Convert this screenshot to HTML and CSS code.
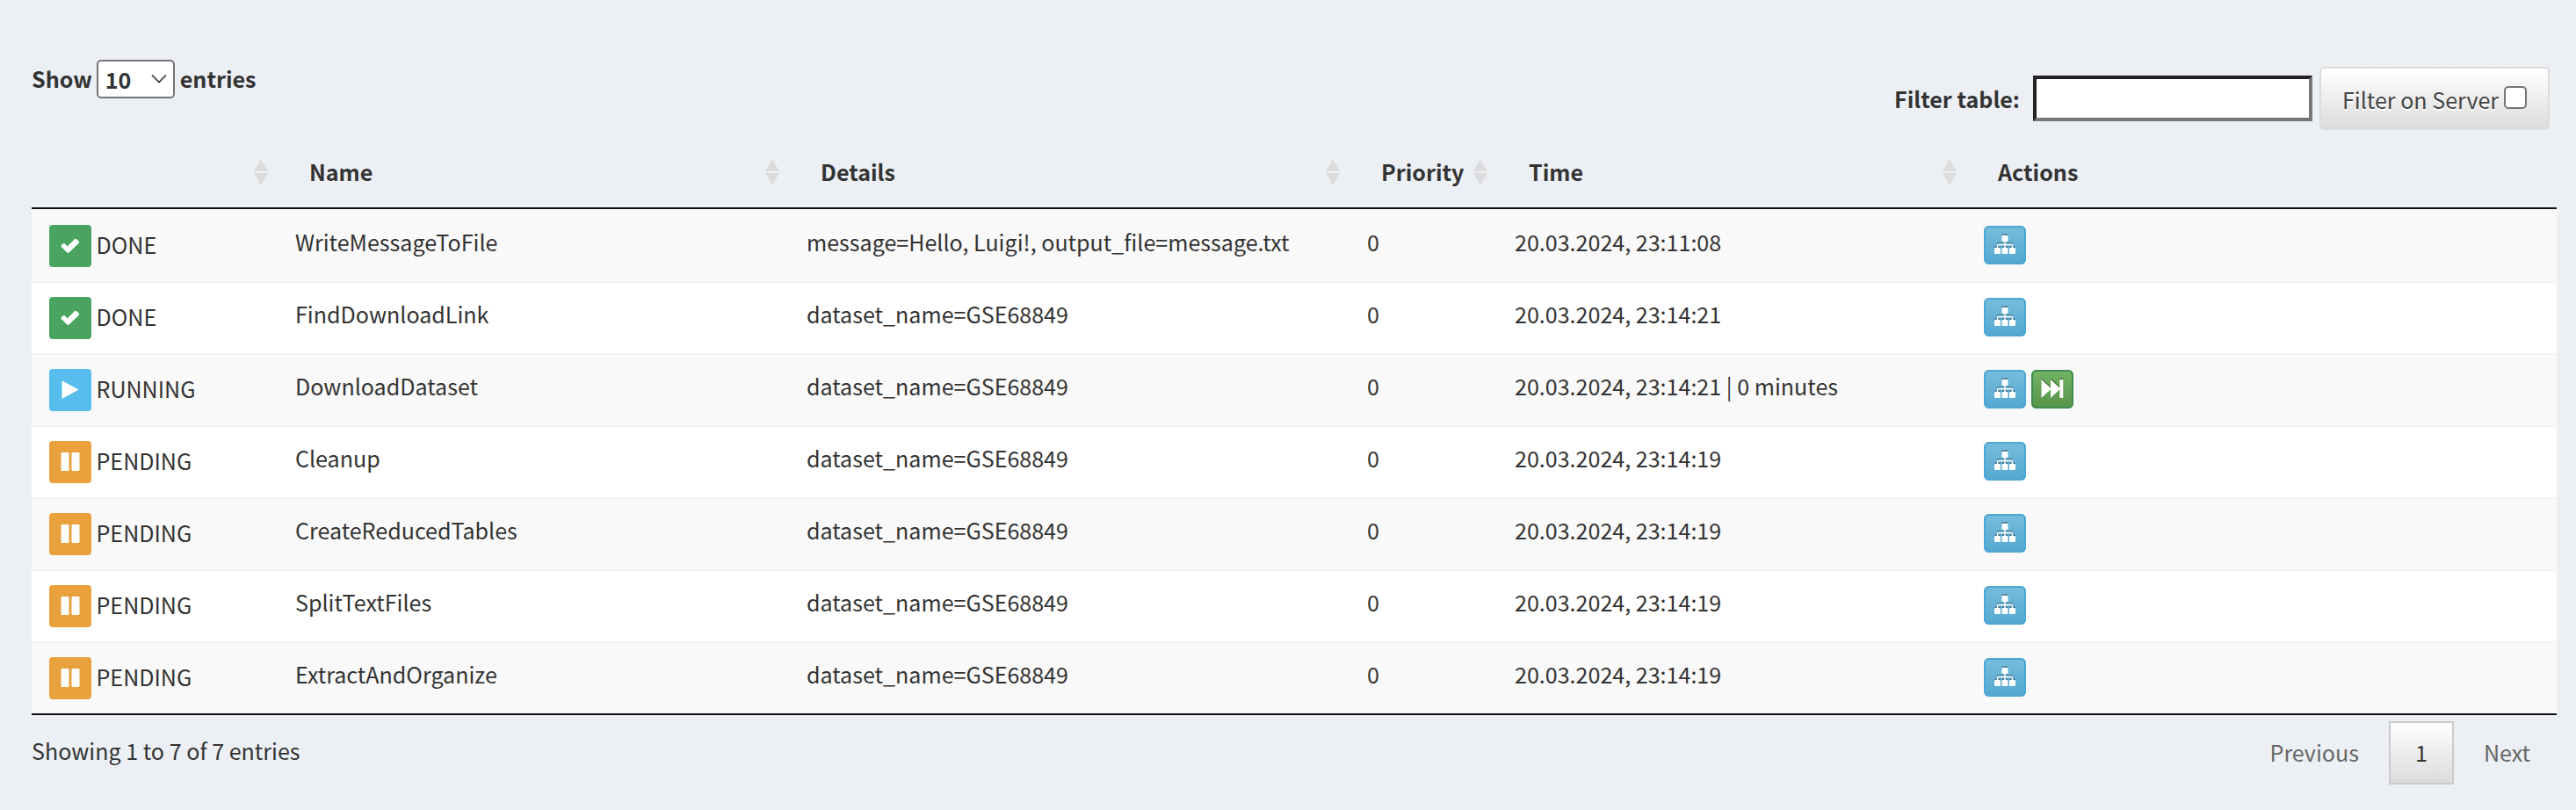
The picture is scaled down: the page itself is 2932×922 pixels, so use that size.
FILE: index.html
```
<!DOCTYPE html>
<html lang="en">
<head>
<meta charset="utf-8">
<title>Luigi Task Status</title>
<link rel="stylesheet" href="styles.css">
</head>
<body>
<svg class="defs" width="0" height="0">
  <symbol id="check" viewBox="0 0 48 48"><path fill="#fff" d="M14 25.300c-.7-.7-.7-1.500 0-2.200l1.600-1.600c.7-.7 1.500-.7 2.200 0l2.900 2.900 8.200-8.200c.7-.7 1.500-.7 2.200 0l2.600 2.300c.7.7.7 1.600 0 2.300L22.500 31.600c-.6.6-1.400.6-2 0Z"/></symbol>
  <symbol id="play" viewBox="0 0 48 48"><path fill="#fff" d="M14.500 13.200 33.600 23.500 14.500 34Z"/></symbol>
  <symbol id="pause" viewBox="0 0 48 48"><rect fill="#fff" x="13.500" y="13" width="9" height="21" rx="1"/><rect fill="#fff" x="25.500" y="13" width="9" height="21" rx="1"/></symbol>
  <symbol id="sitemap" viewBox="0 0 48 44"><g fill="#fff"><rect x="20.500" y="11" width="7" height="7" rx="1"/><rect x="12" y="25" width="7" height="7" rx="1"/><rect x="20.500" y="25" width="7" height="7" rx="1"/><rect x="29" y="25" width="7" height="7" rx="1"/></g><path fill="none" stroke="#fff" stroke-width="1.500" d="M24 17v9M15.500 26v-3.300q0-1.200 1.200-1.200h14.600q1.200 0 1.200 1.200V26"/></symbol>
  <symbol id="forward" viewBox="0 0 48 44"><path fill="#fff" d="M11.500 11 22 20.800V11l10.300 9.700V12q0-1 1-1h2q1 0 1 1v19q0 1-1 1h-2q-1 0-1-1v-8.800L22 32v-9.800L11.500 32Z"/></symbol>
  <symbol id="sort" viewBox="0 0 18 32"><path fill="#dcdcdc" d="M9 1 17 15H1ZM1 17H17L9 31Z"/></symbol>
</svg>
<main class="page">
  <div class="toolbar">
    <label class="length">Show <span class="select">10<svg class="chevron" width="18" height="12" viewBox="0 0 18 12"><path d="M1 1.500 9 9.500 17 1.500" fill="none" stroke="#333" stroke-width="1.700"/></svg></span> entries</label>
    <div class="filter">
      <label class="filter-label" for="q">Filter table:</label>
      <input class="filter-input" id="q" type="text">
      <label class="server">Filter on Server<span class="checkbox"></span></label>
    </div>
  </div>
  <div class="table">
    <div class="row head">
      <div><svg class="sort"><use href="#sort"/></svg></div>
      <div>Name<svg class="sort"><use href="#sort"/></svg></div>
      <div>Details<svg class="sort"><use href="#sort"/></svg></div>
      <div>Priority<svg class="sort"><use href="#sort"/></svg></div>
      <div>Time<svg class="sort"><use href="#sort"/></svg></div>
      <div>Actions</div>
    </div>
    <div class="row"><div class="status"><svg class="badge done"><use href="#check"/></svg>DONE</div><div>WriteMessageToFile</div><div>message=Hello, Luigi!, output_file=message.txt</div><div>0</div><div>20.03.2024, 23:11:08</div><div class="actions"><svg class="btn info"><use href="#sitemap"/></svg></div></div>
    <div class="row"><div class="status"><svg class="badge done"><use href="#check"/></svg>DONE</div><div>FindDownloadLink</div><div>dataset_name=GSE68849</div><div>0</div><div>20.03.2024, 23:14:21</div><div class="actions"><svg class="btn info"><use href="#sitemap"/></svg></div></div>
    <div class="row"><div class="status"><svg class="badge running"><use href="#play"/></svg>RUNNING</div><div>DownloadDataset</div><div>dataset_name=GSE68849</div><div>0</div><div>20.03.2024, 23:14:21 | 0 minutes</div><div class="actions"><svg class="btn info"><use href="#sitemap"/></svg><svg class="btn success"><use href="#forward"/></svg></div></div>
    <div class="row"><div class="status"><svg class="badge pending"><use href="#pause"/></svg>PENDING</div><div>Cleanup</div><div>dataset_name=GSE68849</div><div>0</div><div>20.03.2024, 23:14:19</div><div class="actions"><svg class="btn info"><use href="#sitemap"/></svg></div></div>
    <div class="row"><div class="status"><svg class="badge pending"><use href="#pause"/></svg>PENDING</div><div>CreateReducedTables</div><div>dataset_name=GSE68849</div><div>0</div><div>20.03.2024, 23:14:19</div><div class="actions"><svg class="btn info"><use href="#sitemap"/></svg></div></div>
    <div class="row"><div class="status"><svg class="badge pending"><use href="#pause"/></svg>PENDING</div><div>SplitTextFiles</div><div>dataset_name=GSE68849</div><div>0</div><div>20.03.2024, 23:14:19</div><div class="actions"><svg class="btn info"><use href="#sitemap"/></svg></div></div>
    <div class="row"><div class="status"><svg class="badge pending"><use href="#pause"/></svg>PENDING</div><div>ExtractAndOrganize</div><div>dataset_name=GSE68849</div><div>0</div><div>20.03.2024, 23:14:19</div><div class="actions"><svg class="btn info"><use href="#sitemap"/></svg></div></div>
  </div>
  <div class="footer">
    <div class="info-text">Showing 1 to 7 of 7 entries</div>
    <div class="pager"><span class="page-link">Previous</span><span class="page-link current">1</span><span class="page-link">Next</span></div>
  </div>
</main>
</body>
</html>
```
FILE: styles.css
```
* { box-sizing: border-box; }
body {
  margin: 0;
  background: #ecf0f5;
  color: #333;
  font: 25.070px/40px "Noto Sans CJK SC", "Open Sans", sans-serif;
  white-space: nowrap;
}
.defs { position: absolute; }
.page { padding: 68px 22px 0 36px; height: 922px; overflow: hidden; }
.toolbar { display: flex; justify-content: space-between; height: 98px; font-weight: 700; }
.length { display: flex; gap: 6px; height: 44px; line-height: 43px; }
.select {
  display: flex;
  align-items: center;
  justify-content: space-between;
  width: 89px;
  height: 44px;
  margin-left: -1px;
  padding: 0 7px 0 8px;
  border: 2px solid #767676;
  border-radius: 5px;
  background: #fff;
  line-height: 38px;
}
.filter { display: flex; align-items: center; height: 72px; margin: 8px 8px 0 0; }
.filter-label { margin-right: 15px; }
.filter-input { width: 318px; height: 52px; margin-right: 8px; padding: 0; border: 4px solid; border-color: #222 #767676 #767676 #222; background: #fff; }
.server {
  display: flex;
  width: 262px;
  height: 72px;
  padding: 15px 0 0 24px;
  border: 2px solid #dcdcdc;
  border-radius: 5px;
  background: linear-gradient(#fff, #dcdcdc);
  color: #444;
  font-weight: 400;
  text-shadow: 0 2px 0 #fff;
}
.checkbox { width: 26px; height: 26px; margin: 5px 0 0 6px; border: 2px solid #767676; border-radius: 5px; background: #fff; }
.table { border-bottom: 2px solid #111; }
.row {
  display: grid;
  grid-template-columns: 280px 582px 638px 168px 534px 1fr;
  height: 82px;
  border-top: 2px solid #f4f4f4;
  background: #fff;
}
.row:nth-child(even) { background: #f9f9f9; }
.row > div { padding: 15px 0 0 20px; }
.row.head { height: 72px; border-top: 0; border-bottom: 2px solid #111; background: none; font-weight: 700; }
.head > div { display: flex; justify-content: space-between; padding: 9px 10px 0 36px; }
.head > div:first-child { justify-content: flex-end; }
.sort { width: 18px; height: 32px; margin-top: 5px; flex: none; }
.row > .status { display: flex; gap: 5.5px; padding-top: 16px; line-height: 44px; }
.badge { width: 48px; height: 48px; border-radius: 4px; }
.done { background: #4aa361; }
.running { background: #56bdec; }
.pending { background: #e8a13d; }
.row > .actions { display: flex; gap: 6px; padding-top: 17px; }
.btn { width: 48px; height: 44px; border-radius: 6px; }
.btn use { filter: drop-shadow(0 -2px 0 rgba(0, 0, 0, .25)); }
.info { background: linear-gradient(#76bddb, #53a8d1); box-shadow: inset 0 0 0 2px #4ba7d4; }
.success { background: linear-gradient(#73b566, #579249); box-shadow: inset 0 0 0 2px #3e8c50; }
.footer { display: flex; justify-content: space-between; }
.info-text { padding-top: 20px; }
.pager { display: flex; gap: 4px; margin: 7px 0 0; }
.page-link { height: 72px; padding: 15px 30px 0; color: #666; line-height: 40px; }
.current { width: 74px; padding: 13px 0 0; border: 2px solid #cacaca; background: linear-gradient(#fff, #dcdcdc); color: #333; text-align: center; }
```
